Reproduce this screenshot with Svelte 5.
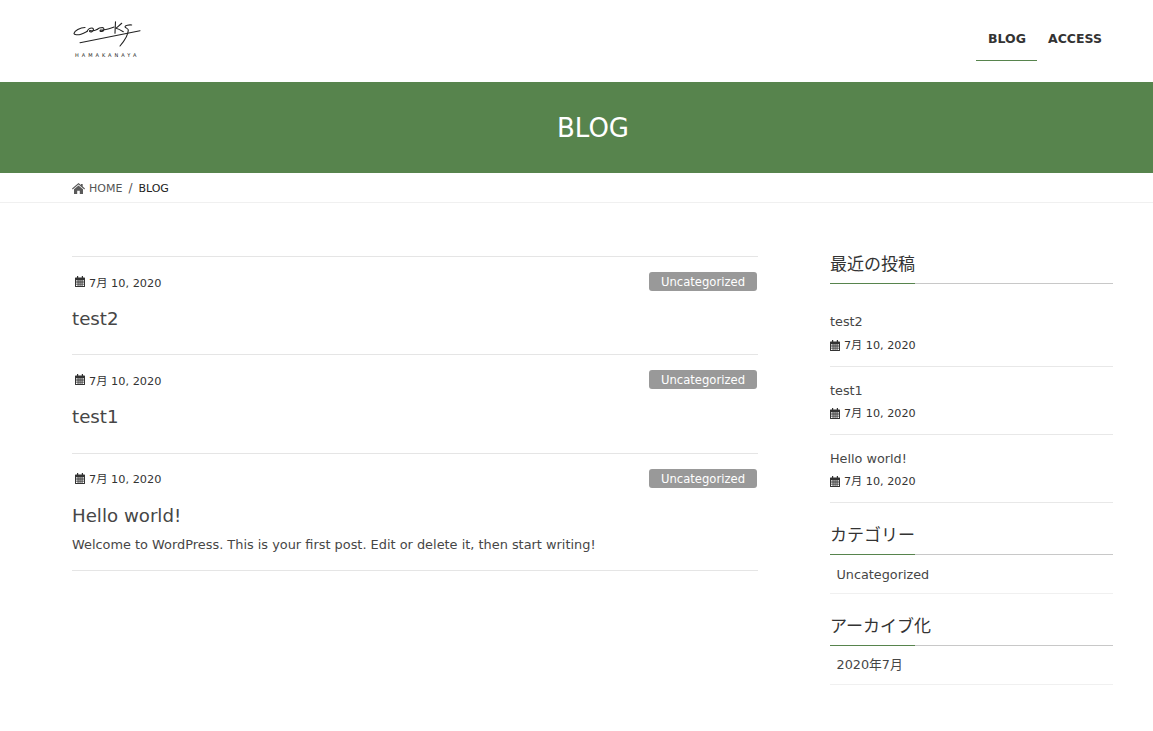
<script>
	const posts = [
		{ title: 'test2', date: '7月 10, 2020', excerpt: '' },
		{ title: 'test1', date: '7月 10, 2020', excerpt: '' },
		{ title: 'Hello world!', date: '7月 10, 2020', excerpt: 'Welcome to WordPress. This is your first post. Edit or delete it, then start writing!' }
	];
</script>

{#snippet calendar()}
	<svg class="cal" viewBox="0 0 10 11" width="10" height="11">
		<path fill="currentColor" fill-rule="evenodd" d="M2 0h1.200v1.400h3.600V0H8v1.400h1.400c.3 0 .6.3.6.6v8.400c0 .3-.3.6-.6.6H.6c-.3 0-.6-.3-.6-.6V2c0-.3.3-.6.6-.6H2zM1 4.200v1.400h1.600V4.200zM3.500 4.200v1.400h1.100V4.200zM5.500 4.200v1.400h1.100V4.200zM7.500 4.200v1.400H9V4.200zM1 6.400v1.400h1.600V6.400zM3.500 6.400v1.400h1.100V6.400zM5.500 6.400v1.400h1.100V6.400zM7.500 6.400v1.400H9V6.400zM1 8.600V10h1.600V8.600zM3.500 8.600V10h1.100V8.600zM5.500 8.600V10h1.100V8.600zM7.500 8.600V10H9V8.600z" />
	</svg>
{/snippet}

<div class="page">
	<header class="site-header">
		<div class="container header-inner">
			<a class="logo" href="#top">
				<svg viewBox="0 0 70 36" width="70" height="36">
					<g fill="none" stroke="#222" stroke-width="1.100" stroke-linecap="round" stroke-linejoin="round">
						<path d="M13 5.500C8 5.500 2.500 9 2 11.300 1.800 13 6 13.200 9 12.200 11 11.500 13 10.500 15 9.500" />
						<path d="M15 9.500C16 7 18.500 6 20 6 22 6 22 9.500 19.500 10 17.500 10.300 17 9 18 8.500 20 9 23 8.500 25 7.500" />
						<path d="M25 7.500C26.500 6 29 5.500 30.500 5.500 32.500 5.700 32.500 9 30 9.500 28 9.800 27.500 8.700 28.500 8 31 8.800 36 7 42 5" />
						<path d="M43.500-.3C43.300 4 43.100 8 43 11.300" />
						<path d="M49.700 1.300C47.500 3 45.700 5 44 6.300c2.500.5 5 2 7.300 3.400" />
						<path d="M59.700 3c-2.500-.3-6.700.2-6.700 1.700 0 1.300 3.300 1.600 3.300 3.300 0 5.500-4.500 11.500-8.300 16" />
						<path d="M8 20.700 68 8.700" />
					</g>
					<text x="3" y="35" class="logo-text">HAMAKANAYA</text>
				</svg>
			</a>
			<nav class="nav">
				<a class="nav-item current" href="#blog">BLOG</a>
				<a class="nav-item" href="#access">ACCESS</a>
			</nav>
		</div>
	</header>

	<div class="banner"><h1>BLOG</h1></div>

	<div class="breadcrumb">
		<div class="container crumbs">
			<svg class="home" viewBox="0 0 13 11" width="13" height="11">
				<path fill="#5a5a5a" d="M6.500 0 9 2.100V1h1.700v2.600L13 5.600l-.7.800-5.800-4.900L.7 6.400 0 5.600zM6.500 2.500l4.500 3.700V11H7.800V7.700H5.200V11H2V6.200z" />
			</svg>
			<a href="#home">HOME</a>
			<span class="sep">/</span>
			<span class="here">BLOG</span>
		</div>
	</div>

	<div class="container content">
		<main class="main">
			{#each posts as post}
				<article class="post">
					<div class="meta">
						<span class="date">{@render calendar()}{post.date}</span>
						<span class="badge">Uncategorized</span>
					</div>
					<h2>{post.title}</h2>
					{#if post.excerpt}<p>{post.excerpt}</p>{/if}
				</article>
			{/each}
		</main>

		<aside class="side">
			<section class="recent">
				<h3>最近の投稿</h3>
				<ul class="recent-list">
					{#each posts as post}
						<li>
							<a href="#post">{post.title}</a>
							<span class="date">{@render calendar()}{post.date}</span>
						</li>
					{/each}
				</ul>
			</section>
			<section>
				<h3>カテゴリー</h3>
				<div class="link-row">Uncategorized</div>
			</section>
			<section>
				<h3>アーカイブ化</h3>
				<div class="link-row last">2020年7月</div>
			</section>
		</aside>
	</div>
</div>

<style>
	:global(body) {
		margin: 0;
		background: #fff;
		font-family: "DejaVu Sans", "Noto Sans CJK JP", sans-serif;
		color: #464646;
	}
	a {
		color: inherit;
		text-decoration: none;
	}
	.page {
		height: 731px;
		overflow: hidden;
	}
	.container {
		width: 1041px;
		margin-left: 72px;
	}
	.site-header {
		height: 82px;
	}
	.header-inner {
		display: flex;
		justify-content: space-between;
	}
	.logo {
		display: block;
		padding-top: 22px;
		height: 36px;
	}
	.logo svg {
		display: block;
		overflow: visible;
	}
	.logo-text {
		font-size: 5px;
		letter-spacing: 3px;
		fill: #222;
	}
	.nav {
		display: flex;
		padding-top: 15px;
	}
	.nav-item {
		box-sizing: border-box;
		height: 46px;
		padding: 15px 11px 0;
		font-size: 12.500px;
		font-weight: 700;
		color: #333;
		line-height: 17px;
	}
	.nav-item.current {
		padding-left: 12px;
		border-bottom: 1px solid #57844d;
	}
	.banner {
		height: 91px;
		background: #57844d;
		display: flex;
		align-items: center;
		justify-content: center;
		padding-left: 33px;
	}
	.banner h1 {
		margin: 0;
		font-size: 26px;
		font-weight: 400;
		color: #fff;
	}
	.breadcrumb {
		height: 29px;
		border-bottom: 1px solid #f0f0f0;
	}
	.crumbs {
		display: flex;
		align-items: center;
		box-sizing: border-box;
		height: 29px;
		padding-top: 1px;
		font-size: 11px;
		color: #555;
	}
	.home {
		margin-right: 4px;
	}
	.sep {
		margin: 0 6px;
		font-size: 12px;
	}
	.here {
		color: #222;
	}
	.content {
		display: flex;
		justify-content: space-between;
		padding-top: 53px;
	}
	.main {
		width: 686px;
		border-top: 1px solid #e5e5e5;
		align-self: flex-start;
	}
	.post {
		border-bottom: 1px solid #e5e5e5;
		padding: 15px 0 22.400px;
	}
	.post:last-child {
		padding-bottom: 15px;
	}
	.meta {
		display: flex;
		justify-content: space-between;
		align-items: center;
		height: 19px;
	}
	.date {
		display: flex;
		align-items: center;
		font-size: 11.300px;
		color: #333;
		padding-left: 3px;
	}
	.cal {
		margin-right: 4px;
		color: #333;
	}
	.badge {
		box-sizing: border-box;
		width: 108px;
		height: 19px;
		margin-right: 1px;
		border-radius: 3px;
		background: #999;
		color: #fff;
		font-size: 11.600px;
		line-height: 20px;
		text-align: center;
	}
	.post h2 {
		margin: 15px 0 0;
		font-size: 18.200px;
		font-weight: 400;
		line-height: 26px;
	}
	.post p {
		margin: 6px 0 0;
		font-size: 12.900px;
		line-height: 20px;
	}
	.side {
		width: 283px;
		margin-top: -2px;
	}
	.side h3 {
		position: relative;
		margin: 0;
		height: 29px;
		border-bottom: 1px solid #c8c8c8;
		font-size: 17px;
		font-weight: 400;
		line-height: 20px;
		color: #333;
	}
	.side h3::after {
		content: '';
		position: absolute;
		left: 0;
		bottom: -1px;
		width: 85px;
		height: 1px;
		background: #57844d;
	}
	.side section + section {
		margin-top: 22px;
	}
	.recent-list {
		list-style: none;
		margin: 0;
		padding: 15px 0 0;
	}
	.recent-list li {
		border-bottom: 1px solid #e8e8e8;
		padding: 14px 0 11px;
		height: 42px;
	}
	.recent-list li:first-child {
		padding-top: 13px;
		height: 43px;
	}
	.recent-list li:first-child a {
		margin-bottom: 4px;
	}
	.recent-list li a {
		display: block;
		margin-bottom: 3px;
		font-size: 12.800px;
		line-height: 20px;
	}
	.recent-list .date {
		padding-left: 0;
		font-size: 11.200px;
		line-height: 20px;
	}
	.recent-list .cal {
		margin-top: -2px;
	}
	.link-row {
		box-sizing: border-box;
		height: 39px;
		padding: 10px 6.500px 0;
		border-bottom: 1px solid #f0f0f0;
		font-size: 12.800px;
		line-height: 20px;
	}
	.link-row.last {
		padding-top: 9px;
	}
</style>
